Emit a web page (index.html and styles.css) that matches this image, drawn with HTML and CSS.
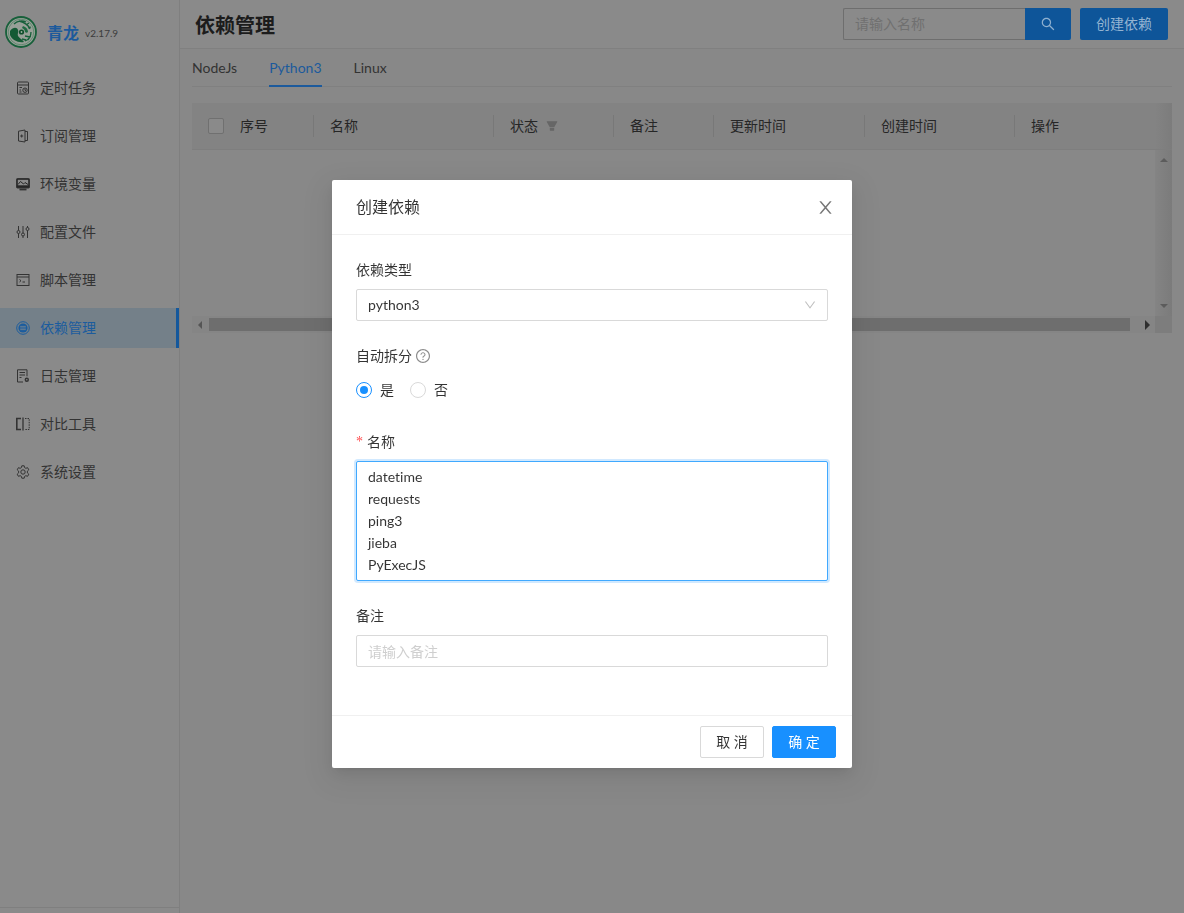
FILE: index.html
```html
<!DOCTYPE html>
<html lang="zh-CN">
<head>
<meta charset="utf-8">
<title>依赖管理</title>
<link rel="stylesheet" href="styles.css">
</head>
<body>
<div class="app">
  <aside class="sidebar">
    <div class="brand">
      <svg class="logo" viewBox="0 0 32 32">
        <circle cx="16" cy="16" r="15" fill="#98a098" stroke="#17603a" stroke-width="1.8"/>
        <circle cx="16" cy="16" r="12.800" fill="none" stroke="#3f7a58" stroke-width=".6"/>
        <path d="M5 15c3-4 7-4 8-1 1 2-1 4 0 6s4 3 6 6c-6 1-12-2-14-7z" fill="#145a34"/>
        <path d="M9 8c3-3 8-4 12-2M14 5c4 1 9 3 11 8M21 9l3-2M23 12l3-1" fill="none" stroke="#17603a" stroke-width="1.300"/>
        <path d="M18 10c3 1 5 3 5 6-1 1-2 1-3 0 0-2-1-3-3-4z" fill="#1f6a42"/>
        <path d="M26 16c0 5-3 8-6 9M20 20l5 1-2 3M17 23l4 1" fill="none" stroke="#17603a" stroke-width="1.300"/>
        <circle cx="16.500" cy="16" r="2.600" fill="#0f4f2b"/>
        <circle cx="16.500" cy="16" r=".9" fill="#9fb0a4"/>
      </svg>
      <span class="brand-name">青龙</span>
      <span class="brand-version">v2.17.9</span>
    </div>
    <nav class="menu">
      <a class="menu-item">
        <svg class="menu-icon" viewBox="0 0 14 14"><rect x="1.500" y="1" width="11" height="12" rx="1"/><path d="M1.500 4h11M3.500 6.500h2.500M3.500 9h1.500M3.500 11h2"/><circle cx="9" cy="9.200" r="2.200"/><path d="M9 8v1.200l.9.5"/></svg>
        <span>定时任务</span>
      </a>
      <a class="menu-item">
        <svg class="menu-icon" viewBox="0 0 14 14"><path d="M2.500 2.200L9 1v12l-6.500-1zM9 2.500h2.500v9H9"/><path d="M5.700 5.500v3M4.200 7h3"/></svg>
        <span>订阅管理</span>
      </a>
      <a class="menu-item">
        <svg class="menu-icon" viewBox="0 0 14 14"><rect x="0.500" y="1.500" width="13" height="9.500" rx="1" fill="#262626"/><path d="M1.800 2.800h10.400v5.500H1.800z" fill="#8a8a8a" stroke="none"/><path d="M2 7.500l2.500-3 3 2.500 1.500-1.500 3 2" stroke="#262626"/><path d="M3.500 12.500h7" stroke-width="1.800"/></svg>
        <span>环境变量</span>
      </a>
      <a class="menu-item">
        <svg class="menu-icon" viewBox="0 0 14 14"><path d="M2.500 1v4.500M2.500 8.500V13M7 1v7M7 11v2M11.500 1v1.500M11.500 5.500V13"/><circle cx="2.500" cy="7" r="1.500"/><circle cx="7" cy="9.500" r="1.500"/><circle cx="11.500" cy="4" r="1.500"/></svg>
        <span>配置文件</span>
      </a>
      <a class="menu-item">
        <svg class="menu-icon" viewBox="0 0 14 14"><rect x="1" y="1.500" width="12" height="11"/><path d="M1 4h12M3.500 6.500l1.500 1.200-1.500 1.300M6.500 9h2.500"/></svg>
        <span>脚本管理</span>
      </a>
      <a class="menu-item is-active">
        <svg class="menu-icon menu-icon-active" viewBox="0 0 14 14"><circle cx="7" cy="7" r="6.300"/><circle cx="7" cy="7" r="4.600" fill="#1b5c9e" stroke="none"/><path d="M4.200 5.400h5.600M4.200 7h5.600M4.200 8.600h5.600" stroke="#78868f" stroke-width=".8"/></svg>
        <span>依赖管理</span>
      </a>
      <a class="menu-item">
        <svg class="menu-icon" viewBox="0 0 14 14"><path d="M7 13H1.500V.8h9.500v6.500"/><path d="M3.500 3.500h5.500M3.500 6h5.500M3.500 8.500h2"/><circle cx="10.800" cy="10.800" r="1.500" stroke-width="1.400"/></svg>
        <span>日志管理</span>
      </a>
      <a class="menu-item">
        <svg class="menu-icon" viewBox="0 0 14 14"><path d="M5 1.500H.8v11H5" stroke-width="1.600"/><path d="M7 0.500v13" stroke-width="1.300"/><path d="M9 1.500h4.200v11H9" stroke-dasharray="1.500 1"/></svg>
        <span>对比工具</span>
      </a>
      <a class="menu-item">
        <svg class="menu-icon" viewBox="0 0 14 14"><path d="M5.800.8h2.400l.4 1.800 1.200.7 1.800-.6 1.200 2.100-1.400 1.300v1.800l1.400 1.300-1.200 2.100-1.800-.6-1.200.7-.4 1.800H5.800l-.4-1.800-1.200-.7-1.800.6-1.200-2.100 1.400-1.300V6.100L1.200 4.800l1.200-2.100 1.800.6 1.200-.7z"/><circle cx="7" cy="7" r="2.200"/></svg>
        <span>系统设置</span>
      </a>
    </nav>
    <div class="sidebar-foot"></div>
  </aside>

  <main class="main">
    <header class="page-head">
      <h1 class="page-title">依赖管理</h1>
      <div class="page-actions">
        <div class="search">
          <input class="search-input" placeholder="请输入名称">
          <button class="search-btn" type="button">
            <svg class="search-icon" viewBox="64 64 896 896"><path d="M909.6 854.5L649.9 594.8C690.2 542.7 712 479 712 412c0-80.2-31.3-155.4-87.9-212.1-56.6-56.7-132-87.9-212.1-87.9s-155.5 31.3-212.1 87.9C143.2 256.5 112 331.8 112 412c0 80.1 31.3 155.5 87.9 212.1C256.5 680.8 331.8 712 412 712c67 0 130.6-21.8 182.7-62l259.7 259.6a8.2 8.2 0 0011.6 0l43.6-43.5a8.2 8.2 0 000-11.6zM570.4 570.4C528 612.7 471.8 636 412 636s-116-23.3-158.4-65.6C211.3 528 188 471.8 188 412s23.3-116.1 65.6-158.4C296 211.3 352.2 188 412 188s116.1 23.2 158.4 65.6S636 352.2 636 412s-23.3 116.1-65.6 158.4z"/></svg>
          </button>
        </div>
        <button class="create-btn" type="button">创建依赖</button>
      </div>
    </header>

    <div class="content">
      <div class="tabs">
        <span class="tab">NodeJs</span>
        <span class="tab is-current">Python3</span>
        <span class="tab">Linux</span>
      </div>

      <div class="table">
        <div class="table-head">
          <div class="th th-check"><span class="checkbox"></span></div>
          <div class="th th-sep">序号</div>
          <div class="th th-sep">名称</div>
          <div class="th th-sep">状态
            <svg class="filter-icon" viewBox="64 64 896 896"><path d="M349 838c0 17.7 14.2 32 31.800 32h262.400c17.600 0 31.800-14.300 31.800-32V642H349v196zm531.100-684H143.900c-24.500 0-39.800 26.700-27.500 48l221.300 376h348.800l221.300-376c12.100-21.300-3.200-48-27.700-48z"/></svg>
          </div>
          <div class="th th-sep">备注</div>
          <div class="th th-sep">更新时间</div>
          <div class="th th-sep">创建时间</div>
          <div class="th">操作</div>
          <div class="th-gutter"></div>
        </div>
        <div class="table-body">
          <div class="table-empty"></div>
          <div class="vscroll">
            <span class="arrow arrow-up"></span>
            <span class="arrow arrow-down"></span>
          </div>
        </div>
        <div class="table-foot">
          <div class="hscroll">
            <span class="arrow arrow-left"></span>
            <span class="hthumb"></span>
            <span class="arrow arrow-right"></span>
          </div>
          <div class="corner"></div>
        </div>
      </div>
    </div>
  </main>
</div>

<div class="overlay">
  <section class="modal">
    <header class="modal-head">
      <h2 class="modal-title">创建依赖</h2>
      <svg class="modal-close" viewBox="64 64 896 896"><path d="M563.8 512l262.5-312.900c4.400-5.200.7-13.100-6.100-13.100h-79.800c-4.700 0-9.200 2.100-12.300 5.700L511.600 449.800 295.100 191.700c-3-3.600-7.500-5.700-12.300-5.700H203c-6.800 0-10.500 7.900-6.100 13.100L459.400 512 196.900 824.900A7.950 7.950 0 00203 838h79.800c4.700 0 9.200-2.100 12.300-5.700l216.500-258.100 216.500 258.100c3 3.600 7.500 5.700 12.300 5.700h79.800c6.800 0 10.500-7.900 6.100-13.100L563.800 512z"/></svg>
    </header>
    <form class="modal-body">
      <div class="field">
        <label class="field-label">依赖类型</label>
        <div class="select">
          <span>python3</span>
          <svg class="select-arrow" viewBox="64 64 896 896"><path d="M884 256h-75c-5.100 0-9.900 2.500-12.900 6.600L512 654.200 227.900 262.600c-3-4.100-7.800-6.600-12.900-6.600h-75c-6.500 0-10.300 7.400-6.500 12.700l352.600 486.100c12.800 17.600 39 17.600 51.700 0l352.600-486.100c3.900-5.300.1-12.700-6.400-12.700z"/></svg>
        </div>
      </div>
      <div class="field">
        <label class="field-label">自动拆分
          <svg class="help-icon" viewBox="64 64 896 896"><path d="M512 64C264.600 64 64 264.600 64 512s200.600 448 448 448 448-200.600 448-448S759.400 64 512 64zm0 820c-205.400 0-372-166.600-372-372s166.600-372 372-372 372 166.600 372 372-166.600 372-372 372z"/><path d="M623.600 316.700C593.600 290.400 554 276 512 276s-81.600 14.500-111.600 40.700C369.200 344 352 380.700 352 420v7.600c0 4.400 3.600 8 8 8h48c4.400 0 8-3.600 8-8V420c0-44.100 43.100-80 96-80s96 35.900 96 80c0 31.100-22 59.600-56.100 72.700-21.200 8.100-39.200 22.300-52.100 40.900-13.100 19-19.900 41.800-19.900 64.900V620c0 4.400 3.600 8 8 8h48c4.400 0 8-3.600 8-8v-22.700a48.300 48.300 0 0130.900-44.800c59-22.700 97.100-74.700 97.100-132.500.1-39.300-17.100-76-48.300-103.300zM472 732a40 40 0 1080 0 40 40 0 10-80 0z"/></svg>
        </label>
        <div class="radios">
          <span class="radio"><span class="radio-dot is-on"></span><span class="radio-text">是</span></span>
          <span class="radio"><span class="radio-dot"></span><span class="radio-text">否</span></span>
        </div>
      </div>
      <div class="field">
        <label class="field-label"><span class="required">*</span>名称</label>
        <textarea class="textarea" rows="5">datetime
requests
ping3
jieba
PyExecJS</textarea>
      </div>
      <div class="field">
        <label class="field-label">备注</label>
        <input class="input" placeholder="请输入备注">
      </div>
    </form>
    <footer class="modal-foot">
      <button class="btn" type="button">取 消</button>
      <button class="btn btn-primary" type="button">确 定</button>
    </footer>
  </section>
</div>
</body>
</html>
```
FILE: styles.css
```css
* { box-sizing: border-box; }
html, body { margin: 0; height: 100%; }
body {
  background: #888;
  color: #2b2b2b;
  font-family: Lato, "Noto Sans CJK SC", sans-serif;
  font-size: 14px;
  line-height: 22px;
  font-variant-ligatures: none;
  overflow: hidden;
}
button, input, textarea { font: inherit; font-variant-ligatures: none; }

.app { display: flex; height: 913px; }

/* sidebar */
.sidebar {
  width: 180px;
  flex: none;
  display: flex;
  flex-direction: column;
  background: #8a8a8a;
  border-right: 1px solid #7f7f7f;
}
.brand { height: 68px; display: flex; align-items: center; padding: 0 0 4px 5px; }
.logo { width: 32px; height: 32px; flex: none; }
.brand-name { margin-left: 10px; font-size: 16px; font-weight: 700; color: #1c5a9c; line-height: 24px; margin-top: 2px; }
.brand-version { margin-left: 6px; font-size: 10px; color: #3c3c3c; margin-top: 2px; }
.menu { flex: 1; display: flex; flex-direction: column; gap: 8px; }
.menu-item {
  height: 40px;
  display: flex;
  align-items: center;
  gap: 10px;
  padding-left: 16px;
  color: #333;
}
.menu-icon { width: 14px; height: 14px; flex: none; fill: none; stroke: #333; stroke-width: 1; }
.menu-icon-active { stroke: #1b5c9e; }
.is-active { background: #748089; color: #1b5c9e; border-right: 3px solid #14589c; }
.sidebar-foot { height: 6px; border-top: 1px solid #7f7f7f; }

/* main */
.main { flex: 1; min-width: 0; display: flex; flex-direction: column; }
.page-head {
  height: 49px;
  flex: none;
  display: flex;
  align-items: flex-start;
  justify-content: space-between;
  padding: 8px 16px 0 15px;
  background: #8a8a8a;
  border-bottom: 1px solid #808080;
}
.page-title { margin: 0; font-size: 20px; line-height: 35px; font-weight: 700; color: #1c1c1c; }
.page-actions { display: flex; gap: 9px; }
.search { display: flex; width: 228px; height: 32px; }
.search-input {
  flex: 1;
  min-width: 0;
  padding: 0 11px;
  background: #8a8a8a;
  border: 1px solid #6e6e6e;
  border-right: 0;
  border-radius: 2px 0 0 2px;
  outline: 0;
  color: #333;
}
.search-input::placeholder { color: #707070; }
.search-btn {
  width: 46px;
  padding: 0;
  display: flex;
  align-items: center;
  justify-content: center;
  border: 0;
  border-radius: 0 2px 2px 0;
  background: #0e5599;
}
.search-icon { width: 14px; height: 14px; fill: #8eb0d0; }
.create-btn {
  width: 88px;
  height: 32px;
  padding: 0;
  border: 0;
  border-radius: 2px;
  background: #0e5599;
  color: #94b4d2;
}

.content { padding: 0 12px; flex: 1; }
.tabs {
  height: 38px;
  display: flex;
  gap: 32px;
  border-bottom: 1px solid #808080;
  margin-bottom: 16px;
}
.tab { height: 38px; padding-top: 8px; color: #333; }
.is-current { color: #1c5a9c; border-bottom: 2px solid #1c5a9c; }

.table { width: 980px; }
.table-head {
  display: grid;
  grid-template-columns: 32px 90px 180px 120px 100px 151px 150px 140px 17px;
  height: 47px;
  background: #838383;
  border-bottom: 1px solid #7e7e7e;
}
.th { position: relative; display: flex; align-items: center; gap: 8px; padding-left: 16px; color: #262626; }
.th-sep::after {
  content: "";
  position: absolute;
  right: 0;
  top: 12px;
  width: 1px;
  height: 22px;
  background: #787878;
}
.checkbox {
  width: 16px;
  height: 16px;
  flex: none;
  border: 1px solid #707070;
  border-radius: 2px;
  background: #8a8a8a;
}
.filter-icon { width: 12px; height: 12px; fill: #666; }
.th-gutter { background: linear-gradient(90deg, #838383, #7c7c7c); }
.table-body { display: flex; height: 166px; }
.table-empty { flex: 1; }
.vscroll {
  width: 17px;
  flex: none;
  display: flex;
  flex-direction: column;
  align-items: center;
  justify-content: space-between;
  padding: 8px 0;
  background: linear-gradient(90deg, #848484, #7b7b7b);
}
.table-foot { display: flex; height: 17px; }
.hscroll {
  flex: 1;
  display: flex;
  align-items: center;
  padding-left: 6px;
  background: #858585;
}
.hthumb { width: 921px; height: 13px; margin: 0 15px 0 7px; background: #6e6e6e; flex: none; }
.corner { width: 17px; flex: none; background: #7d7d7d; }
.arrow { display: block; width: 0; height: 0; flex: none; border-style: solid; border-color: transparent; }
.arrow-up { border-width: 0 4px 4px; border-bottom-color: #5c5c5c; }
.arrow-down { border-width: 4px 4px 0; border-top-color: #5c5c5c; }
.arrow-left { border-width: 4px 4px 4px 0; border-right-color: #555; }
.arrow-right { border-width: 5px 0 5px 5px; border-left-color: #2e2e2e; }

/* modal */
.overlay {
  position: fixed;
  inset: 0;
  display: flex;
  justify-content: center;
  align-items: flex-start;
  padding-top: 180px;
}
.modal {
  width: 520px;
  height: 588px;
  display: flex;
  flex-direction: column;
  background: #fff;
  border-radius: 2px;
  box-shadow: 0 3px 6px -4px rgba(0,0,0,.12), 0 6px 16px rgba(0,0,0,.08), 0 9px 28px 8px rgba(0,0,0,.05);
}
.modal-head {
  height: 55px;
  flex: none;
  display: flex;
  align-items: center;
  justify-content: space-between;
  padding: 0 18px 0 24px;
  border-bottom: 1px solid #f0f0f0;
}
.modal-title { margin: 0; font-size: 16px; font-weight: 400; line-height: 22px; color: rgba(0,0,0,.8); }
.modal-close { width: 17px; height: 17px; fill: #777; }
.modal-body { flex: 1; padding: 24px 24px 0; }
.field { margin-bottom: 24px; }
.field-label { display: flex; align-items: center; gap: 4px; height: 22px; margin-bottom: 8px; color: rgba(0,0,0,.8); }
.required { color: #ff4d4f; font-family: "Liberation Serif", serif; font-size: 14px; width: 7px; }
.help-icon { width: 14px; height: 14px; fill: rgba(0,0,0,.45); }
.select, .input, .textarea {
  display: block;
  width: 100%;
  border: 1px solid #d9d9d9;
  border-radius: 2px;
  color: rgba(0,0,0,.8);
  background: #fff;
}
.select { height: 32px; display: flex; align-items: center; justify-content: space-between; padding: 0 11px; }
.select-arrow { width: 12px; height: 12px; fill: #bfbfbf; }
.input { height: 32px; padding: 0 11px; outline: 0; }
.input::placeholder { color: #cfcfcf; }
.textarea {
  height: 120px;
  padding: 4px 11px;
  line-height: 22px;
  resize: none;
  overflow: hidden;
  outline: 0;
  border-color: #40a9ff;
  box-shadow: 0 0 0 2px rgba(24,144,255,.2);
}
.radios { display: flex; align-items: center; height: 32px; padding-bottom: 2px; }
.radio { display: flex; align-items: center; margin-right: 8px; color: rgba(0,0,0,.8); }
.radio-dot { position: relative; width: 16px; height: 16px; flex: none; border: 1px solid #d9d9d9; border-radius: 50%; }
.radio-dot.is-on { border-color: #1890ff; }
.radio-dot.is-on::after {
  content: "";
  position: absolute;
  inset: 3px;
  border-radius: 50%;
  background: #1890ff;
}
.radio-text { padding: 0 8px; }
.modal-foot {
  height: 53px;
  flex: none;
  display: flex;
  justify-content: flex-end;
  align-items: center;
  gap: 8px;
  padding: 0 16px;
  border-top: 1px solid #f0f0f0;
}
.btn {
  width: 64px;
  height: 32px;
  padding: 0;
  border: 1px solid #d9d9d9;
  border-radius: 2px;
  background: #fff;
  color: rgba(0,0,0,.8);
}
.btn-primary { border-color: #1890ff; background: #1890ff; color: #fff; }
```
